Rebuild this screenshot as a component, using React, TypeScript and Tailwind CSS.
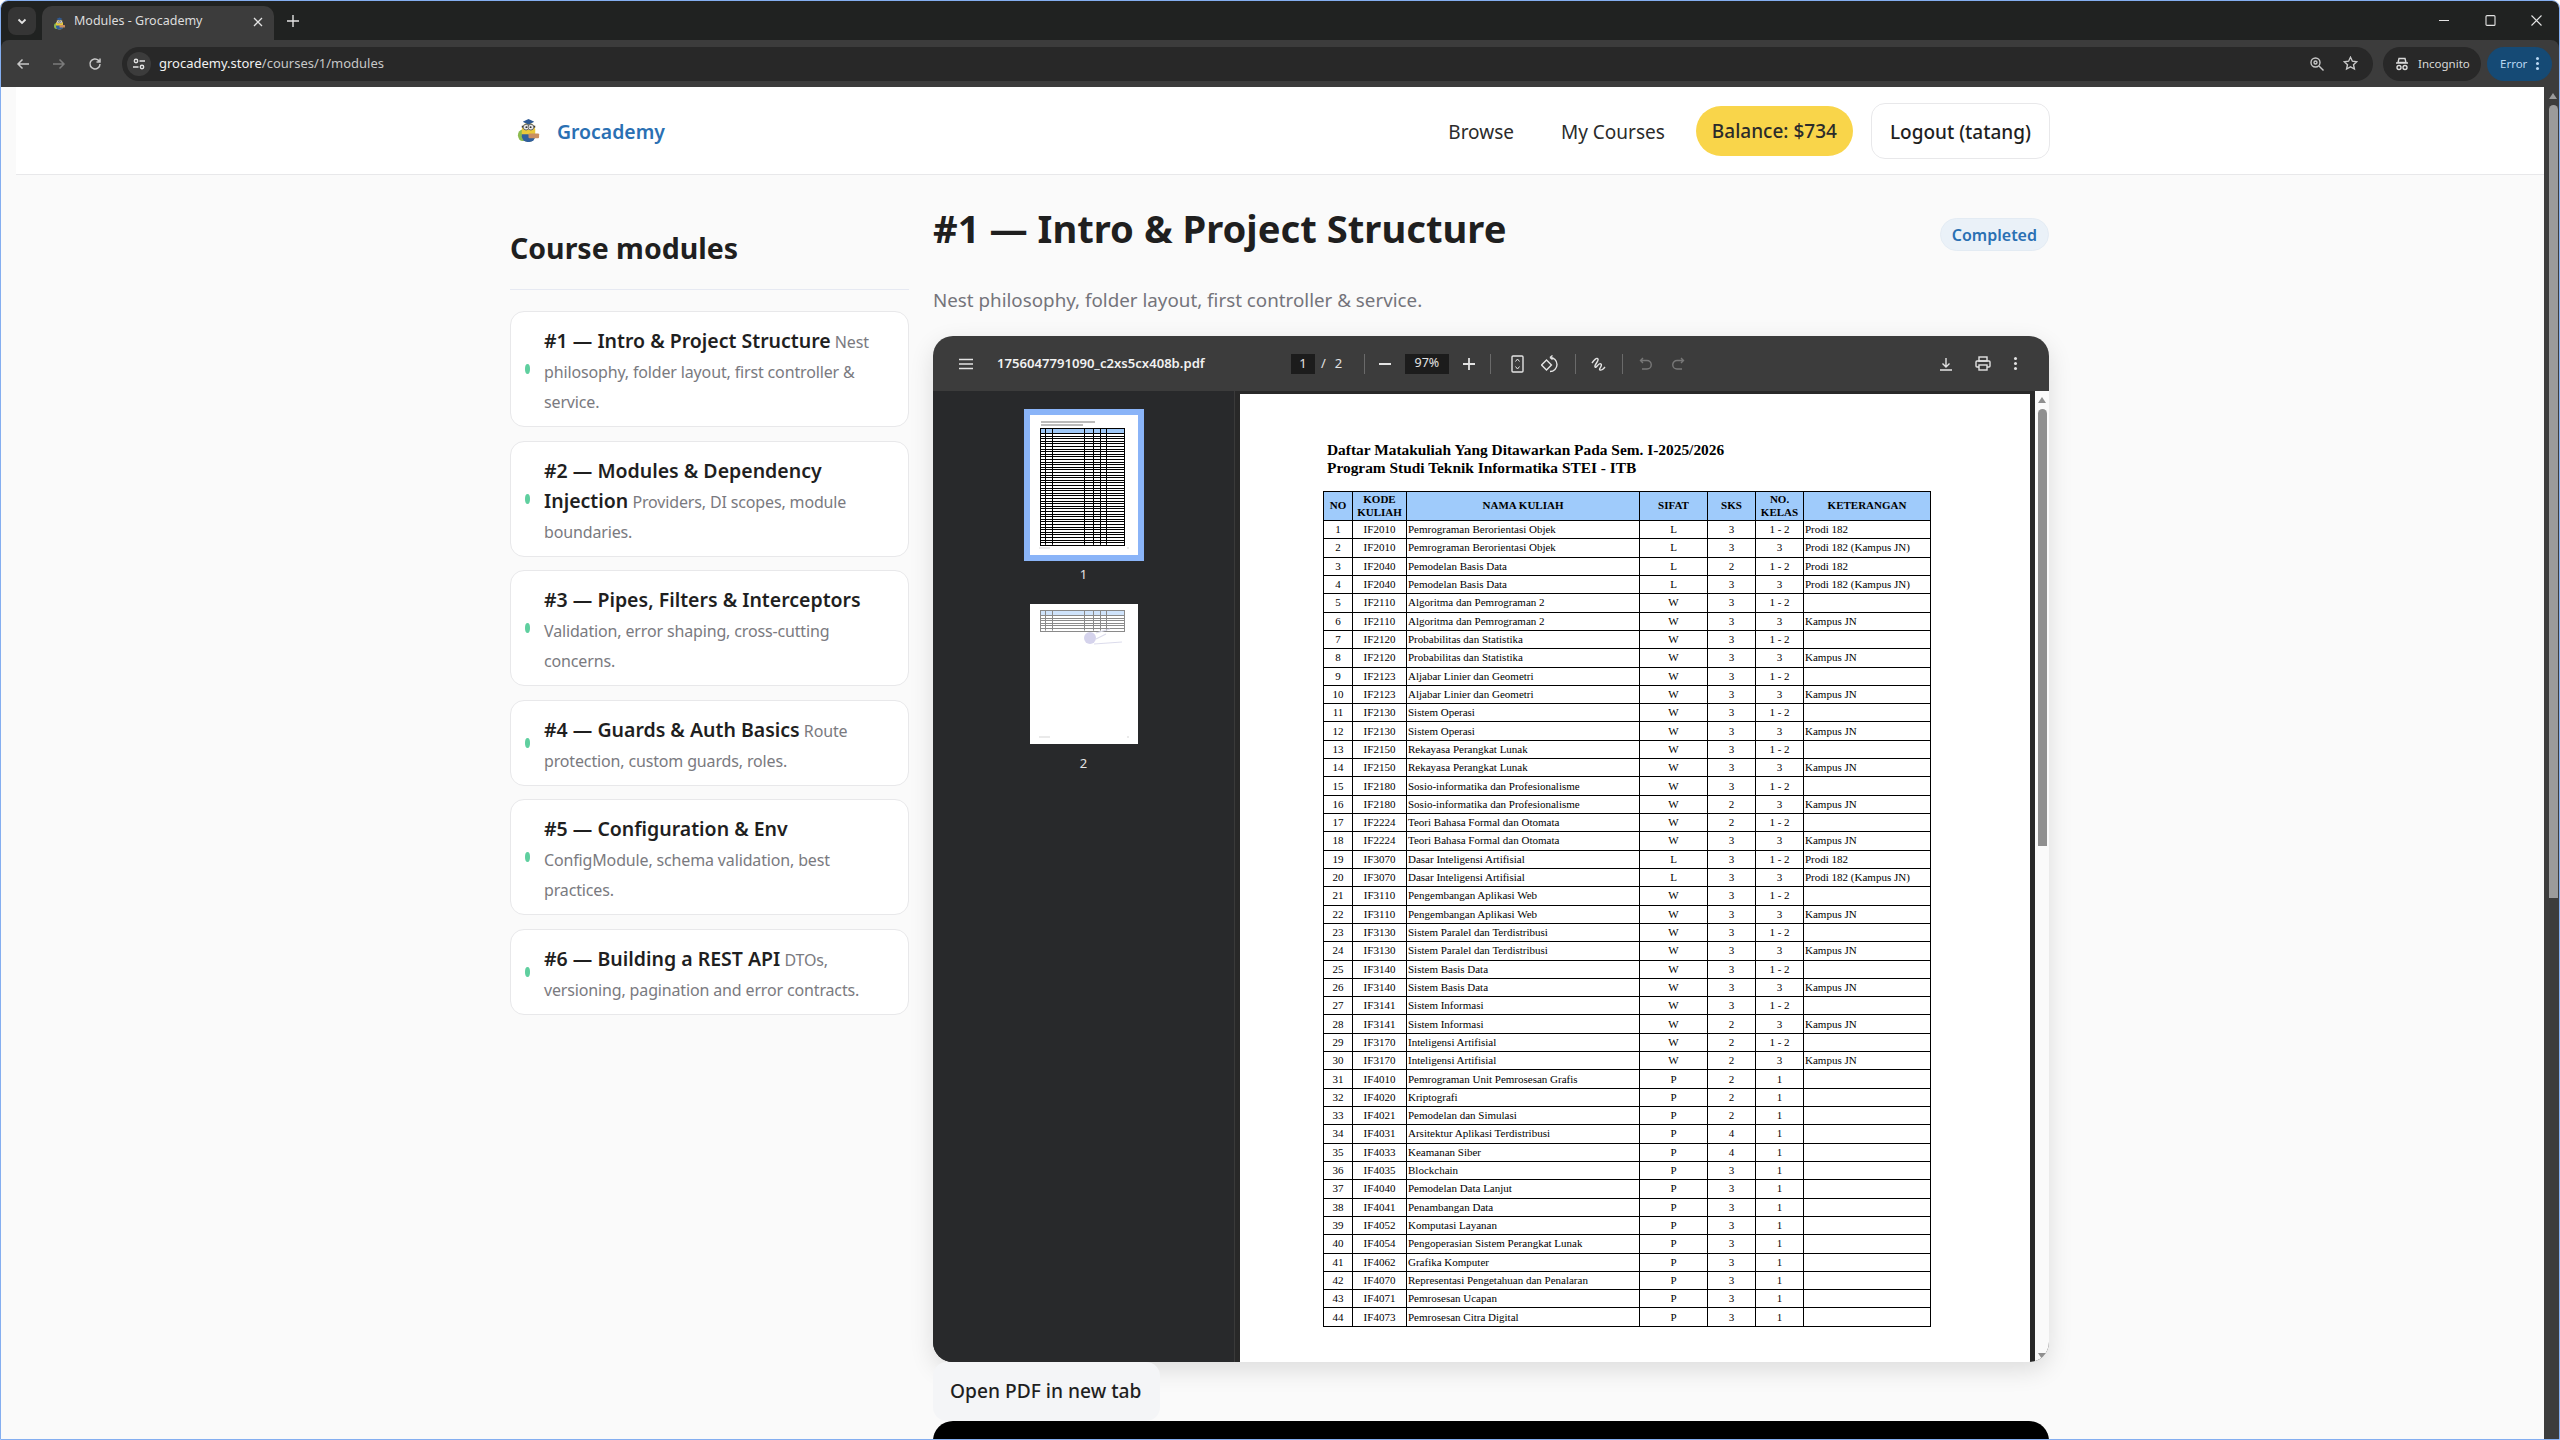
import React from 'react';

const UI = { fontFamily: '"Noto Sans", "Open Sans", sans-serif' };
const SERIF = { fontFamily: '"Liberation Serif", serif' };

const modules = [
  { title: '#1 — Intro & Project Structure', desc: 'Nest philosophy, folder layout, first controller & service.' },
  { title: '#2 — Modules & Dependency Injection', desc: 'Providers, DI scopes, module boundaries.' },
  { title: '#3 — Pipes, Filters & Interceptors', desc: 'Validation, error shaping, cross-cutting concerns.' },
  { title: '#4 — Guards & Auth Basics', desc: 'Route protection, custom guards, roles.' },
  { title: '#5 — Configuration & Env', desc: 'ConfigModule, schema validation, best practices.' },
  { title: '#6 — Building a REST API', desc: 'DTOs, versioning, pagination and error contracts.' },
];

const rows: string[][] = [
  ['1', 'IF2010', 'Pemrograman Berorientasi Objek', 'L', '3', '1 - 2', 'Prodi 182'],
  ['2', 'IF2010', 'Pemrograman Berorientasi Objek', 'L', '3', '3', 'Prodi 182 (Kampus JN)'],
  ['3', 'IF2040', 'Pemodelan Basis Data', 'L', '2', '1 - 2', 'Prodi 182'],
  ['4', 'IF2040', 'Pemodelan Basis Data', 'L', '3', '3', 'Prodi 182 (Kampus JN)'],
  ['5', 'IF2110', 'Algoritma dan Pemrograman 2', 'W', '3', '1 - 2', ''],
  ['6', 'IF2110', 'Algoritma dan Pemrograman 2', 'W', '3', '3', 'Kampus JN'],
  ['7', 'IF2120', 'Probabilitas dan Statistika', 'W', '3', '1 - 2', ''],
  ['8', 'IF2120', 'Probabilitas dan Statistika', 'W', '3', '3', 'Kampus JN'],
  ['9', 'IF2123', 'Aljabar Linier dan Geometri', 'W', '3', '1 - 2', ''],
  ['10', 'IF2123', 'Aljabar Linier dan Geometri', 'W', '3', '3', 'Kampus JN'],
  ['11', 'IF2130', 'Sistem Operasi', 'W', '3', '1 - 2', ''],
  ['12', 'IF2130', 'Sistem Operasi', 'W', '3', '3', 'Kampus JN'],
  ['13', 'IF2150', 'Rekayasa Perangkat Lunak', 'W', '3', '1 - 2', ''],
  ['14', 'IF2150', 'Rekayasa Perangkat Lunak', 'W', '3', '3', 'Kampus JN'],
  ['15', 'IF2180', 'Sosio-informatika dan Profesionalisme', 'W', '3', '1 - 2', ''],
  ['16', 'IF2180', 'Sosio-informatika dan Profesionalisme', 'W', '2', '3', 'Kampus JN'],
  ['17', 'IF2224', 'Teori Bahasa Formal dan Otomata', 'W', '2', '1 - 2', ''],
  ['18', 'IF2224', 'Teori Bahasa Formal dan Otomata', 'W', '3', '3', 'Kampus JN'],
  ['19', 'IF3070', 'Dasar Inteligensi Artifisial', 'L', '3', '1 - 2', 'Prodi 182'],
  ['20', 'IF3070', 'Dasar Inteligensi Artifisial', 'L', '3', '3', 'Prodi 182 (Kampus JN)'],
  ['21', 'IF3110', 'Pengembangan Aplikasi Web', 'W', '3', '1 - 2', ''],
  ['22', 'IF3110', 'Pengembangan Aplikasi Web', 'W', '3', '3', 'Kampus JN'],
  ['23', 'IF3130', 'Sistem Paralel dan Terdistribusi', 'W', '3', '1 - 2', ''],
  ['24', 'IF3130', 'Sistem Paralel dan Terdistribusi', 'W', '3', '3', 'Kampus JN'],
  ['25', 'IF3140', 'Sistem Basis Data', 'W', '3', '1 - 2', ''],
  ['26', 'IF3140', 'Sistem Basis Data', 'W', '3', '3', 'Kampus JN'],
  ['27', 'IF3141', 'Sistem Informasi', 'W', '3', '1 - 2', ''],
  ['28', 'IF3141', 'Sistem Informasi', 'W', '2', '3', 'Kampus JN'],
  ['29', 'IF3170', 'Inteligensi Artifisial', 'W', '2', '1 - 2', ''],
  ['30', 'IF3170', 'Inteligensi Artifisial', 'W', '2', '3', 'Kampus JN'],
  ['31', 'IF4010', 'Pemrograman Unit Pemrosesan Grafis', 'P', '2', '1', ''],
  ['32', 'IF4020', 'Kriptografi', 'P', '2', '1', ''],
  ['33', 'IF4021', 'Pemodelan dan Simulasi', 'P', '2', '1', ''],
  ['34', 'IF4031', 'Arsitektur Aplikasi Terdistribusi', 'P', '4', '1', ''],
  ['35', 'IF4033', 'Keamanan Siber', 'P', '4', '1', ''],
  ['36', 'IF4035', 'Blockchain', 'P', '3', '1', ''],
  ['37', 'IF4040', 'Pemodelan Data Lanjut', 'P', '3', '1', ''],
  ['38', 'IF4041', 'Penambangan Data', 'P', '3', '1', ''],
  ['39', 'IF4052', 'Komputasi Layanan', 'P', '3', '1', ''],
  ['40', 'IF4054', 'Pengoperasian Sistem Perangkat Lunak', 'P', '3', '1', ''],
  ['41', 'IF4062', 'Grafika Komputer', 'P', '3', '1', ''],
  ['42', 'IF4070', 'Representasi Pengetahuan dan Penalaran', 'P', '3', '1', ''],
  ['43', 'IF4071', 'Pemrosesan Ucapan', 'P', '3', '1', ''],
  ['44', 'IF4073', 'Pemrosesan Citra Digital', 'P', '3', '1', ''],
];

function Minion({ size }: { size: number }) {
  return (
    <svg width={size} height={size} viewBox="0 0 24 26" className="shrink-0">
      <ellipse cx="6" cy="18" rx="5" ry="6" fill="#8dbb4f" />
      <rect x="5" y="5" width="14" height="20" rx="7" fill="#e9c93a" />
      <path d="M5 17h14v2a6 6 0 0 1-6 6h-2a6 6 0 0 1-6-6z" fill="#2f5f9e" />
      <path d="M6 4l6-3 6 3-6 3z" fill="#2f5a94" />
      <rect x="5" y="8" width="14" height="2" fill="#3b3b3b" />
      <circle cx="9.5" cy="9.5" r="3" fill="#e8e8e8" stroke="#666" />
      <circle cx="14.5" cy="9.5" r="3" fill="#e8e8e8" stroke="#666" />
      <circle cx="9.8" cy="9.5" r="1" fill="#333" />
      <circle cx="14.2" cy="9.5" r="1" fill="#333" />
      <rect x="12" y="16" width="11" height="5" rx="1" fill="#c98f62" />
    </svg>
  );
}

function Stroke({ w, h, children, className }: { w: number; h: number; children: React.ReactNode; className?: string }) {
  return (
    <svg width={w} height={h} viewBox={`0 0 ${w} ${h}`} fill="none" stroke="currentColor" strokeWidth="1.4" className={className}>
      {children}
    </svg>
  );
}

function BrowserChrome() {
  return (
    <div className="bg-[#202221] shrink-0">
      <div className="h-[39px] flex items-end pl-[7px] relative">
        <div className="w-[28px] h-[28px] mb-[5px] rounded-[8px] bg-[#353535] flex items-center justify-center text-[#e3e3e3]">
          <Stroke w={12} h={12}>
            <path d="M2.5 4.5L6 8l3.5-3.5" strokeWidth="1.8" />
          </Stroke>
        </div>
        <div className="ml-[6px] w-[232px] h-[34px] bg-[#3c3c3c] rounded-t-[10px] flex items-center pl-[11px] pr-[10px] text-[#e3e3e3]">
          <Minion size={13} />
          <span className="ml-[8px] flex-1 text-[12.5px] text-[#dddddd] pb-[3px]" style={UI}>Modules - Grocademy</span>
          <svg width="12" height="12" viewBox="0 0 12 12" stroke="currentColor" strokeWidth="1.3" className="mb-[3px]">
            <path d="M2 2l8 8M10 2l-8 8" />
          </svg>
        </div>
        <svg width="14" height="14" viewBox="0 0 14 14" stroke="#e3e3e3" strokeWidth="1.4" className="ml-[12px] mb-[12px]">
          <path d="M7 1v12M1 7h12" />
        </svg>
        <div className="absolute right-[17px] top-[14px] flex items-center gap-[35px] text-[#e3e3e3]">
          <svg width="11" height="11" viewBox="0 0 11 11" stroke="currentColor" strokeWidth="1.1"><path d="M0 5.5h10" /></svg>
          <svg width="11" height="11" viewBox="0 0 11 11" fill="none" stroke="currentColor" strokeWidth="1.1"><rect x="1" y="0.6" width="9" height="9.8" rx="1" /></svg>
          <svg width="11" height="11" viewBox="0 0 11 11" stroke="currentColor" strokeWidth="1.1"><path d="M0.5 0.5l10 10M10.5 0.5l-10 10" /></svg>
        </div>
      </div>
      <div className="h-[47px] bg-[#3c3c3c] rounded-t-[8px] flex items-center pl-[14px] pr-[7px]">
        <div className="flex items-center gap-[20px] text-[#c7c7c7]">
          <Stroke w={16} h={16}><path d="M14 8H3M7.5 3.5L3 8l4.5 4.5" strokeWidth="1.5" /></Stroke>
          <Stroke w={16} h={16} className="text-[#7b7b7b]"><path d="M2 8h11M8.5 3.5L13 8l-4.5 4.5" strokeWidth="1.5" /></Stroke>
          <Stroke w={16} h={16}><path d="M13 8a5 5 0 1 1-1.5-3.6L13 6M13 2.5V6H9.5" strokeWidth="1.5" /></Stroke>
        </div>
        <div className="ml-[19px] flex-1 h-[34px] bg-[#282828] rounded-full flex items-center pl-[5px] pr-[15px]">
          <div className="w-[24px] h-[24px] rounded-full bg-[#3c3c3c] flex items-center justify-center text-[#e3e3e3]">
            <Stroke w={14} h={14}>
              <circle cx="4" cy="4" r="1.7" />
              <path d="M7.5 4H13M1 10h5.5" />
              <circle cx="10" cy="10" r="1.7" />
            </Stroke>
          </div>
          <span className="ml-[8px] flex-1 text-[13px] text-[#c7c7c7]" style={UI}>
            <span className="text-[#f1f1f1]">grocademy.store</span>/courses/1/modules
          </span>
          <div className="flex items-center gap-[18px] text-[#c7c7c7]">
            <Stroke w={16} h={16}>
              <circle cx="6.5" cy="6.5" r="4.5" />
              <circle cx="6.5" cy="6.5" r="1.5" />
              <path d="M10 10l4.5 4.5" />
            </Stroke>
            <Stroke w={15} h={15}><path d="M7.5 1.2l1.9 4 4.3.5-3.2 3 .9 4.3-3.9-2.2L3.6 13l.9-4.3-3.2-3 4.3-.5z" /></Stroke>
          </div>
        </div>
        <div className="ml-[10px] w-[98px] h-[34px] rounded-full bg-[#282828] flex items-center pl-[12px] text-[#d9d9d9]">
          <Stroke w={14} h={14}>
            <path d="M4 1.5h6l1 4H3zM1 6h12" />
            <circle cx="4" cy="10.5" r="2" />
            <circle cx="10" cy="10.5" r="2" />
          </Stroke>
          <span className="ml-[9px] text-[11.5px]" style={UI}>Incognito</span>
        </div>
        <div className="ml-[6px] w-[65px] h-[34px] rounded-full bg-[#154a75] flex items-center pl-[13px] text-[#b9d7f2]">
          <span className="text-[11.5px]" style={UI}>Error</span>
          <div className="ml-[9px] flex flex-col gap-[2px]">
            <div className="w-[3px] h-[3px] rounded-full bg-[#b9d7f2]" />
            <div className="w-[3px] h-[3px] rounded-full bg-[#b9d7f2]" />
            <div className="w-[3px] h-[3px] rounded-full bg-[#b9d7f2]" />
          </div>
        </div>
      </div>
    </div>
  );
}

function Header() {
  return (
    <div className="h-[88px] shrink-0 ml-[15px] bg-white border-b border-[#e8e8ea] flex items-center pl-[500px] pr-[494px]" style={UI}>
      <Minion size={25} />
      <span className="ml-[16px] pt-[2px] text-[19.4px] font-semibold text-[#2a70b3]">Grocademy</span>
      <div className="flex-1" />
      <span className="pt-[3px] text-[19px] text-[#2b2b2b]">Browse</span>
      <span className="ml-[47px] pt-[3px] text-[19px] text-[#2b2b2b]">My Courses</span>
      <span className="ml-[31px] h-[50px] px-[16px] pt-[2px] rounded-full bg-[#f9d54a] flex items-center text-[19px] font-medium text-[#2b2b2b]">Balance: $734</span>
      <span className="ml-[18px] h-[56px] px-[18px] pt-[3px] rounded-[14px] bg-white border border-[#e8e8ea] flex items-center text-[19px] font-medium text-[#1f1f1f]">Logout (tatang)</span>
    </div>
  );
}

function Sidebar() {
  return (
    <div className="w-[399px] shrink-0">
      <h2 className="text-[28.5px] font-bold text-[#1f1f1f] leading-[40px] pt-[53px] pb-[21px] border-b border-[#e6e9f2]">Course modules</h2>
      <div className="mt-[21px] flex flex-col gap-[13.5px]">
        {modules.map((m) => (
          <div key={m.title} className="flex items-center bg-white border border-[#e8e8ea] rounded-[14px] py-[12px] pl-[14px] pr-[14px]">
            <div className="w-[5px] h-[10px] rounded-[50%] bg-[#5fcf9f] shrink-0" />
            <p className="ml-[14px] leading-[30px] pt-[3px] -mb-[3px]">
              <span className="text-[19.5px] leading-none font-semibold text-[#1f1f1f]">{m.title}</span>{' '}
              <span className="text-[16px] leading-none tracking-[-0.15px] text-[#7a7a80]">{m.desc}</span>
            </p>
          </div>
        ))}
      </div>
    </div>
  );
}

function ToolSep() {
  return <div className="w-px h-[20px] bg-[#6a6a6a]" />;
}

function PdfToolbar() {
  return (
    <div className="h-[55px] bg-[#3c3c3c] flex items-center pl-[26px] pr-[37px] text-[#e3e3e3] relative z-10" style={UI}>
      <Stroke w={14} h={12}><path d="M0 1.5h14M0 6h14M0 10.5h14" /></Stroke>
      <span className="ml-[24px] w-[294px] text-[13.1px] font-semibold text-[#f1f1f1]">1756047791090_c2xs5cx408b.pdf</span>
      <div className="w-[24px] h-[20px] bg-[#1c1c1c] flex items-center justify-center text-[13px]">1</div>
      <span className="ml-[6px] text-[13px]">/</span>
      <span className="ml-[9px] text-[13px] w-[29px]">2</span>
      <ToolSep />
      <Stroke w={12} h={12} className="ml-[14px]"><path d="M0 6h12" strokeWidth="1.8" /></Stroke>
      <div className="ml-[14px] w-[44px] h-[20px] bg-[#1c1c1c] flex items-center justify-center text-[12.5px]">97%</div>
      <Stroke w={12} h={12} className="ml-[14px]"><path d="M0 6h12M6 0v12" strokeWidth="1.8" /></Stroke>
      <div className="ml-[15px]"><ToolSep /></div>
      <Stroke w={14} h={18} className="ml-[20px]">
        <rect x="1" y="1" width="11" height="16" rx="1" />
        <path d="M4.5 6.5L6.5 4l2 2.5M4.5 11.5L6.5 14l2-2.5" strokeWidth="1" />
      </Stroke>
      <Stroke w={18} h={18} className="ml-[16px]">
        <rect x="2" y="6.5" width="7" height="7" transform="rotate(45 5.5 10)" />
        <path d="M9 2.5a7 7 0 1 1 0 14M9 2.5l2.5-2M9 2.5l2.5 2" />
      </Stroke>
      <div className="ml-[16px]"><ToolSep /></div>
      <Stroke w={16} h={16} className="ml-[15px]">
        <path d="M1 7c2-3 5-6 6-4S3 9 4 11s4-5 6-3-3 5-1 6 4-2 5-3" />
      </Stroke>
      <div className="ml-[15px]"><ToolSep /></div>
      <Stroke w={14} h={14} className="ml-[16px] text-[#777777]"><path d="M4 1L1.5 3.5 4 6M2 3.5h6a4 4 0 0 1 0 8.5H3" /></Stroke>
      <Stroke w={14} h={14} className="ml-[18px] text-[#777777]"><path d="M10 1l2.5 2.5L10 6M12 3.5H6a4 4 0 0 0 0 8.5h5" /></Stroke>
      <div className="flex-1" />
      <Stroke w={14} h={14}><path d="M7 1v8.5M3.5 6.5L7 10l3.5-3.5M1 13h12" /></Stroke>
      <Stroke w={16} h={15} className="ml-[22px]">
        <rect x="4" y="1" width="8" height="4" />
        <rect x="1" y="5" width="14" height="6" rx="1" />
        <rect x="4" y="9" width="8" height="5" fill="#3c3c3c" />
      </Stroke>
      <div className="ml-[23px] mr-[-5px] flex flex-col gap-[2px]">
        <div className="w-[3px] h-[3px] bg-[#e3e3e3] rounded-full" />
        <div className="w-[3px] h-[3px] bg-[#e3e3e3] rounded-full" />
        <div className="w-[3px] h-[3px] bg-[#e3e3e3] rounded-full" />
      </div>
    </div>
  );
}

function ThumbPage({ rowsCount, faded }: { rowsCount: number; faded?: boolean }) {
  const top = faded ? 6 : 13;
  const rowH = 2.6;
  const color = faded ? '#8a8a8a' : '#000000';
  const head = faded ? '#cfe3fb' : '#9ec8f8';
  const h = 5 + rowsCount * rowH;
  return (
    <svg width="108" height="140" viewBox="0 0 108 140" className="bg-white block">
      {!faded && <path d="M11 7h54M11 10h42" stroke="#777" strokeWidth="1" />}
      <rect x="11" y={top} width="84" height="5" fill={head} />
      {Array.from({ length: rowsCount }).map((_, i) => (
        <path key={i} d={`M11 ${Math.round(top + 5 + i * rowH) + 0.5}h84`} stroke={color} strokeWidth="1" />
      ))}
      {[4.5, 11.5, 43.5, 52.5, 59.5, 65.5].map((x) => (
        <path key={x} d={`M${11 + x} ${top}v${h}`} stroke={color} strokeWidth="1" />
      ))}
      <rect x="10.5" y={top + 0.5} width="84" height={Math.round(h)} fill="none" stroke={color} strokeWidth="1" />
      {faded && (
        <g>
          <circle cx="60" cy="34" r="6" fill="#d5d3ec" />
          <path d="M66 29l14-4M64 40l28-2M66 35l10-5" stroke="#dcdcec" strokeWidth="1.2" />
        </g>
      )}
      <path d="M9 133h11M97 133h2" stroke="#bbb" strokeWidth="0.6" />
    </svg>
  );
}

function PdfViewer() {
  return (
    <div className="h-[1026px] shrink-0 rounded-[20px] overflow-hidden shadow-[0_8px_24px_rgba(0,0,0,0.12)] flex flex-col">
      <PdfToolbar />
      <div className="flex-1 flex min-h-0 bg-[#282828]">
        <div className="w-[302px] bg-[#28292b] border-r border-[#3a3a3a] flex flex-col items-center pt-[18px] text-[#e3e3e3]" style={UI}>
          <div className="border-[6px] border-[#8ab4f8]"><ThumbPage rowsCount={43} /></div>
          <span className="mt-[4px] text-[13px] leading-[18px]">1</span>
          <div className="mt-[21px]"><ThumbPage rowsCount={6} faded /></div>
          <span className="mt-[10px] text-[13px] leading-[18px]">2</span>
        </div>
        <div className="w-[5px]" />
        <div className="w-[790px] mt-[3px] bg-white pl-[83px] overflow-hidden" style={SERIF}>
          <div className="mt-[47px] text-[15.4px] leading-[18px] font-bold text-black pl-[4px]">
            <div>Daftar Matakuliah Yang Ditawarkan Pada Sem. I-2025/2026</div>
            <div>Program Studi Teknik Informatika STEI - ITB</div>
          </div>
          <table className="mt-[14px] table-fixed border-collapse text-black text-[11px] leading-[13px] w-[607px]">
            <colgroup>
              <col className="w-[29px]" />
              <col className="w-[54px]" />
              <col className="w-[233px]" />
              <col className="w-[68px]" />
              <col className="w-[48px]" />
              <col className="w-[48px]" />
              <col className="w-[127px]" />
            </colgroup>
            <thead>
              <tr className="h-[29px] bg-[#9fcbfb] font-bold text-[11px] leading-[13.5px]">
                {['NO', 'KODE KULIAH', 'NAMA KULIAH', 'SIFAT', 'SKS', 'NO. KELAS', 'KETERANGAN'].map((t) => (
                  <th key={t} className="border-[1.5px] border-black p-0 font-bold text-center">{t}</th>
                ))}
              </tr>
            </thead>
            <tbody>
              {rows.map((r) => (
                <tr key={r[0]} className="h-[18.32px]">
                  <td className="border-[1.5px] border-black p-0 text-center">{r[0]}</td>
                  <td className="border-[1.5px] border-black p-0 text-center">{r[1]}</td>
                  <td className="border-[1.5px] border-black p-0 pl-[1px] whitespace-nowrap">{r[2]}</td>
                  <td className="border-[1.5px] border-black p-0 text-center">{r[3]}</td>
                  <td className="border-[1.5px] border-black p-0 text-center">{r[4]}</td>
                  <td className="border-[1.5px] border-black p-0 text-center">{r[5]}</td>
                  <td className="border-[1.5px] border-black p-0 pl-[1px] whitespace-nowrap">{r[6]}</td>
                </tr>
              ))}
            </tbody>
          </table>
        </div>
        <div className="w-[5px]" />
        <div className="flex-1 bg-[#fafafa] flex flex-col items-center pt-[6px]">
          <div className="w-0 h-0 border-x-[4.5px] border-x-transparent border-b-[6px] border-b-[#8f8f8f]" />
          <div className="mt-[6px] w-[9px] h-[437px] bg-[#8f8f8f] rounded-t-full" />
          <div className="flex-1" />
          <div className="mb-[3px] w-0 h-0 border-x-[4.5px] border-x-transparent border-t-[6px] border-t-[#8f8f8f]" />
        </div>
      </div>
    </div>
  );
}

export default function App() {
  return (
    <div className="h-screen overflow-hidden flex flex-col bg-[#fafafa] border border-[#84aef0] rounded-t-[8px]">
      <BrowserChrome />
      <div className="flex-1 min-h-0 flex">
        <div className="flex-1 min-w-0 flex flex-col" style={UI}>
          <Header />
          <div className="flex-1 min-h-0 flex pl-[509px] gap-[24px]">
            <Sidebar />
            <div className="w-[1116px] shrink-0 flex flex-col">
              <div className="flex items-center justify-between pt-[23px]">
                <h1 className="text-[38.2px] leading-[60px] font-bold text-[#1f1f1f]">#1 — Intro &amp; Project Structure</h1>
                <span className="mt-[13px] h-[33px] px-[11px] rounded-full bg-[#eaf1f8] border border-[#e3ebf3] flex items-center text-[16px] font-semibold text-[#2a70b3]">Completed</span>
              </div>
              <p className="mt-[28px] text-[18.8px] leading-[28px] text-[#74747a]">Nest philosophy, folder layout, first controller &amp; service.</p>
              <div className="mt-[22px] flex flex-col">
                <PdfViewer />
                <div className="flex">
                  <span className="h-[59px] w-[227px] px-[17px] rounded-[14px] bg-[#f4f5f7] flex items-center text-[19.2px] font-medium text-[#1f1f1f]">Open PDF in new tab</span>
                </div>
                <div className="h-[60px] bg-black rounded-t-[20px]" />
              </div>
            </div>
          </div>
        </div>
        <div className="w-[15px] shrink-0 bg-[#3c3c3c] flex flex-col items-center pt-[6px] pl-[3px]">
          <div className="w-0 h-0 border-x-[4.5px] border-x-transparent border-b-[6px] border-b-[#9b9b9b]" />
          <div className="mt-[6px] w-[9px] h-[793px] bg-[#9b9b9b] rounded-t-full" />
        </div>
      </div>
    </div>
  );
}
